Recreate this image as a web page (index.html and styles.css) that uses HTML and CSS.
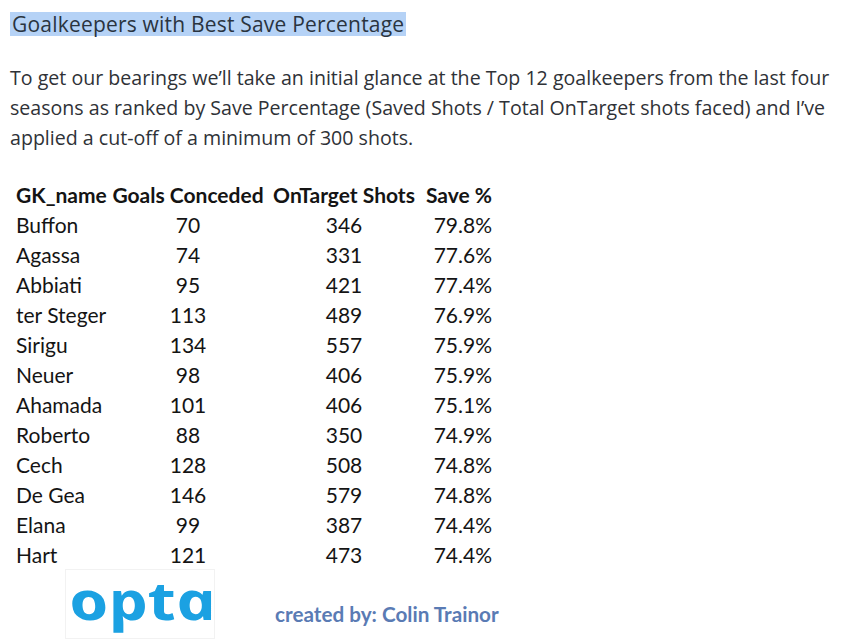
FILE: index.html
```html
<!DOCTYPE html>
<html>
<head>
<meta charset="utf-8">
<link rel="stylesheet" href="styles.css">
</head>
<body>
<div class="page">
  <h1 class="heading">Goalkeepers with Best Save Percentage</h1>
  <p class="intro">To get our bearings we’ll take an initial glance at the Top 12 goalkeepers from the last four seasons as ranked by Save Percentage (Saved Shots / Total OnTarget shots faced) and I’ve applied a cut-off of a minimum of 300 shots.</p>
  <div class="table">
    <div class="row head">
      <span class="c-name">GK_name</span><span class="c-num">Goals Conceded</span><span class="c-num">OnTarget Shots</span><span class="c-pct">Save %</span>
    </div>
    <div class="row"><span class="c-name">Buffon</span><span class="c-num">70</span><span class="c-num">346</span><span class="c-pct">79.8%</span></div>
    <div class="row"><span class="c-name">Agassa</span><span class="c-num">74</span><span class="c-num">331</span><span class="c-pct">77.6%</span></div>
    <div class="row"><span class="c-name">Abbiati</span><span class="c-num">95</span><span class="c-num">421</span><span class="c-pct">77.4%</span></div>
    <div class="row"><span class="c-name">ter Steger</span><span class="c-num">113</span><span class="c-num">489</span><span class="c-pct">76.9%</span></div>
    <div class="row"><span class="c-name">Sirigu</span><span class="c-num">134</span><span class="c-num">557</span><span class="c-pct">75.9%</span></div>
    <div class="row"><span class="c-name">Neuer</span><span class="c-num">98</span><span class="c-num">406</span><span class="c-pct">75.9%</span></div>
    <div class="row"><span class="c-name">Ahamada</span><span class="c-num">101</span><span class="c-num">406</span><span class="c-pct">75.1%</span></div>
    <div class="row"><span class="c-name">Roberto</span><span class="c-num">88</span><span class="c-num">350</span><span class="c-pct">74.9%</span></div>
    <div class="row"><span class="c-name">Cech</span><span class="c-num">128</span><span class="c-num">508</span><span class="c-pct">74.8%</span></div>
    <div class="row"><span class="c-name">De Gea</span><span class="c-num">146</span><span class="c-num">579</span><span class="c-pct">74.8%</span></div>
    <div class="row"><span class="c-name">Elana</span><span class="c-num">99</span><span class="c-num">387</span><span class="c-pct">74.4%</span></div>
    <div class="row"><span class="c-name">Hart</span><span class="c-num">121</span><span class="c-num">473</span><span class="c-pct">74.4%</span></div>
  </div>
  <div class="footer">
    <div class="logo"><span class="logo-text">opta</span></div>
    <div class="credit">created by: Colin Trainor</div>
  </div>
</div>
</body>
</html>
```

FILE: styles.css
```css
html, body {
  margin: 0;
  padding: 0;
  background: #ffffff;
}

.page {
  padding: 12px 0 0 10px;
  font-family: "Open Sans", "Noto Sans", sans-serif;
  color: #2f3237;
}

.heading {
  display: inline-block;
  margin: 0;
  padding: 0 2px;
  font-size: 21px;
  font-weight: 400;
  line-height: 24px;
  letter-spacing: 0.2px;
  background: #b5d2f6;
  color: #2a3440;
}

.intro {
  margin: 26px 0 0 0;
  width: 832px;
  font-size: 19.6px;
  line-height: 30px;
}

.table {
  margin-top: 27px;
  margin-left: 6px;
  font-family: "Lato", "Noto Sans", sans-serif;
  font-size: 21px;
  color: #141414;
}

.row {
  display: grid;
  grid-template-columns: 94px 156px 156px 70px;
  height: 30px;
  line-height: 30px;
  white-space: nowrap;
}

.row.head {
  font-weight: 700;
}

.c-name {
  text-align: left;
}

.c-num {
  text-align: center;
}

.c-pct {
  text-align: right;
}

.footer {
  display: flex;
  align-items: flex-end;
  margin-left: 55px;
  margin-top: -1px;
}

.logo {
  width: 148px;
  height: 68px;
  border: 1px solid #f2f2f2;
  display: flex;
  align-items: center;
  justify-content: center;
}

.logo-text {
  font-family: "Open Sans", "Noto Sans", sans-serif;
  font-style: italic;
  font-weight: 700;
  font-size: 53px;
  line-height: 1;
  color: #1ba1e2;
  display: inline-block;
  transform: scaleX(1.27) skewX(12deg);
  letter-spacing: 0;
  margin-top: -10px;
  margin-left: 2px;
}

.credit {
  margin-left: 60px;
  margin-bottom: 13px;
  font-family: "Lato", "Noto Sans", sans-serif;
  font-weight: 700;
  font-size: 20.7px;
  color: #5a7bb4;
}
```
